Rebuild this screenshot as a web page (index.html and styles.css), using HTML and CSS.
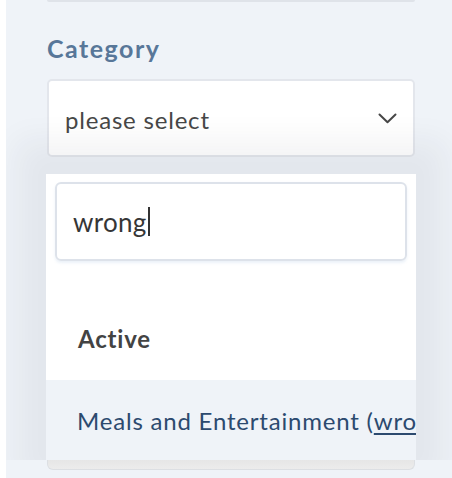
FILE: index.html
```html
<!DOCTYPE html>
<html>
<head>
<meta charset="utf-8">
<link rel="stylesheet" href="styles.css">
</head>
<body>
<div class="panel">
  <div class="prev-field"></div>
  <div class="field-label">Category</div>
  <div class="select">
    <span class="select-value">please select</span>
    <svg class="chevron" width="19" height="11" viewBox="0 0 19 11"><path d="M1.5 1.5 L9.5 9.2 L17.5 1.5" fill="none" stroke="#474747" stroke-width="2" stroke-linecap="round" stroke-linejoin="round"/></svg>
  </div>
  <div class="dropdown">
    <div class="search">
      <span class="search-text">wrong</span><span class="caret"></span>
    </div>
    <div class="group-header">Active</div>
    <div class="option">Meals and Entertainment (<span class="match">wrong</span>)</div>
  </div>
  <div class="next-field"></div>
</div>
</body>
</html>
```

FILE: styles.css
```css
html, body {
  margin: 0;
  padding: 0;
  background: #ffffff;
}
body {
  font-family: Lato, "Open Sans", sans-serif;
  width: 452px;
  height: 478px;
  overflow: hidden;
}
.panel {
  position: relative;
  margin-left: 6px;
  width: 446px;
  height: 478px;
  background: #eff3f8;
  padding: 0 37px 0 41px;
  box-sizing: border-box;
  overflow: hidden;
  display: flex;
  flex-direction: column;
}
.prev-field {
  height: 2px;
  background: #dfe3e9;
  border-radius: 0 0 3px 3px;
  flex: none;
}
.field-label {
  margin-top: 31px;
  font-size: 25px;
  font-weight: 700;
  color: #587799;
  line-height: 30px;
  letter-spacing: 1.5px;
}
.select {
  margin-top: 16px;
  height: 78px;
  box-sizing: border-box;
  border: 2px solid #e3e6ec;
  border-radius: 5px;
  background: #ffffff;
  display: flex;
  align-items: center;
  justify-content: space-between;
  padding: 2px 16px 0 16px;
  flex: none;
}
.select-value {
  font-size: 24px;
  line-height: 29px;
  color: #474747;
  letter-spacing: 0.8px;
}
.chevron {
  display: block;
  margin-top: -2px;
}
.dropdown {
  position: relative;
  margin: 17px -1px 0 -1px;
  background: #ffffff;
  padding: 8px 0 0 0;
  overflow: hidden;
  flex: none;
  box-shadow: 0 -4px 30px 30px rgba(30, 40, 60, 0.055);
  clip-path: inset(-100px -100px 0 -100px);
}
.search {
  margin: 0 9px;
  height: 79px;
  box-sizing: border-box;
  border: 2px solid #dde2ea;
  border-radius: 6px;
  box-shadow: 0 2px 3px rgba(120, 160, 210, 0.15);
  display: flex;
  align-items: center;
  padding-left: 16px;
}
.search-text {
  font-size: 26px;
  line-height: 30px;
  color: #363636;
  letter-spacing: 0.3px;
}
.caret {
  display: inline-block;
  width: 2px;
  height: 29px;
  background: #333;
  margin-left: 1px;
}
.group-header {
  height: 119px;
  box-sizing: border-box;
  padding: 63px 0 0 32px;
  font-size: 24px;
  font-weight: 700;
  line-height: 29px;
  color: #434343;
  letter-spacing: 0.8px;
}
.option {
  height: 80px;
  background: #eff3f8;
  display: flex;
  align-items: center;
  padding-left: 31px;
  font-size: 24px;
  line-height: 29px;
  color: #2c4a6f;
  white-space: nowrap;
  letter-spacing: 0.8px;
}
.match {
  text-decoration: underline;
  text-decoration-thickness: 2px;
  text-underline-offset: 3px;
}
.next-field {
  height: 9px;
  background: linear-gradient(#e6e6e6, #ececec);
  border: 1px solid #dcdfe3;
  border-top: none;
  border-radius: 0 0 6px 6px;
  flex: none;
}
```
